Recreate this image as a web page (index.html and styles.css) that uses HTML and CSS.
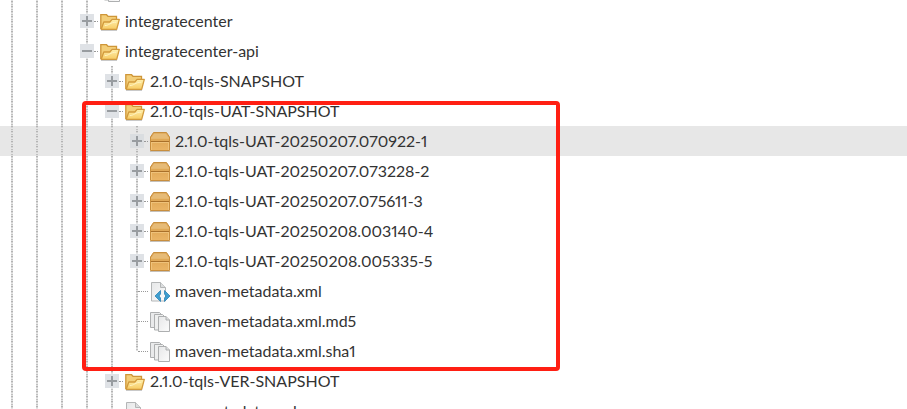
FILE: index.html
```html
<!DOCTYPE html>
<html lang="en">
<head>
    <meta charset="UTF-8">
    <meta name="viewport" content="width=device-width, initial-scale=1.0">
    <title>Artifact Tree</title>
    <link rel="stylesheet" href="styles.css">
</head>
<body>
    <!-- Icons shared by the tree rows -->
    <svg class="sprite" aria-hidden="true">
        <defs>
            <linearGradient id="gold" x1="0" y1="0" x2="0" y2="1">
                <stop offset="0" stop-color="#fff0ad"/>
                <stop offset="1" stop-color="#f7cb63"/>
            </linearGradient>
            <linearGradient id="wood" x1="0" y1="0" x2="0" y2="1">
                <stop offset="0" stop-color="#d89f4c"/>
                <stop offset="1" stop-color="#ebb566"/>
            </linearGradient>
            <linearGradient id="paper" x1="0" y1="0" x2="1" y2="1">
                <stop offset="0" stop-color="#e6e7e8"/>
                <stop offset="1" stop-color="#fcfcfc"/>
            </linearGradient>
            <symbol id="folder" viewBox="0 0 20 20">
                <path d="M1 18.500h16" stroke="#c9c9c9"/>
                <path d="M.8 17V2.700h5.700l1.500 1.600h8.500v3" fill="#f3ce78" stroke="#cf9638" stroke-width="1.300"/>
                <path d="M1.200 17.300l2.600-7.300h6l2.300-2.700h7.200l-2.600 10z" fill="url(#gold)" stroke="#d29a3c" stroke-width="1.300" stroke-linejoin="round"/>
                <path d="M4.800 13.500c4 .4 5.500-3.600 11.500-3.200" fill="none" stroke="#fff3c2"/>
            </symbol>
            <symbol id="package" viewBox="0 0 20 20">
                <path d="M0 19.500h20" stroke="#c4c0ba"/>
                <path d="M.5 18.500V5l3-4.500h13l3 4.500v13.500z" fill="url(#wood)" stroke="#c88e3e"/>
                <path d="M1.500 5.500l2.500-4h12l2.500 4z" fill="#e6bb78"/>
                <path d="M1 6h18" stroke="#edc788"/>
                <path d="M1 9.500h18" stroke="#a9702a"/>
                <path d="M1 10.500h18M1.500 11v7M18.500 11v7" stroke="#efc27a"/>
            </symbol>
            <symbol id="page" viewBox="0 0 20 20">
                <path d="M1.500.5h9l5 5v13.500h-14z" fill="url(#paper)" stroke="#b4b6b7"/>
                <path d="M10.500.5v5h5" fill="#dcdedf" stroke="#b4b6b7"/>
            </symbol>
            <symbol id="xml" viewBox="0 0 20 20">
                <use href="#page"/>
                <path d="M5 14l5.500-5.500v3.500l-1.500 2 1.500 2v3.500zM20 14l-5.500-5.500v3.500l1.500 2-1.500 2v3.500z" fill="#3f9fd0" stroke="#2d83b5" stroke-width=".8"/>
            </symbol>
            <symbol id="files" viewBox="0 0 20 20">
                <path d="M.5.500h9l2 2v13h-11z" fill="#e9eaeb" stroke="#adafb0"/>
                <path d="M4.500 2.500h8l2 2v13.500h-10z" fill="#eeefef" stroke="#adafb0"/>
                <path d="M8.500 4.500h7.500l3.500 3.500v11.500h-11z" fill="url(#paper)" stroke="#adafb0"/>
                <path d="M16 4.500V8h3.500" fill="#dcdedf" stroke="#adafb0"/>
            </symbol>
        </defs>
    </svg>

    <ul class="tree">
        <li>
            <div class="row">
                <span class="guide"></span><span class="guide"></span><span class="guide"></span>
                <span class="guide branch"></span>
                <svg class="icon"><use href="#files"/></svg>
            </div>
        </li>
        <li>
            <div class="row">
                <span class="guide"></span><span class="guide"></span><span class="guide"></span>
                <span class="guide branch"><button class="toggle plus" aria-label="Expand"></button></span>
                <svg class="icon"><use href="#folder"/></svg>
                <span class="label">integratecenter</span>
            </div>
        </li>
        <li>
            <div class="row">
                <span class="guide"></span><span class="guide"></span><span class="guide"></span>
                <span class="guide branch"><button class="toggle" aria-label="Collapse"></button></span>
                <svg class="icon"><use href="#folder"/></svg>
                <span class="label">integratecenter-api</span>
            </div>
            <ul>
                <li>
                    <div class="row">
                        <span class="guide"></span><span class="guide"></span><span class="guide"></span><span class="guide"></span>
                        <span class="guide branch"><button class="toggle plus" aria-label="Expand"></button></span>
                        <svg class="icon"><use href="#folder"/></svg>
                        <span class="label">2.1.0-tqls-SNAPSHOT</span>
                    </div>
                </li>
                <li class="marked">
                    <div class="row">
                        <span class="guide"></span><span class="guide"></span><span class="guide"></span><span class="guide"></span>
                        <span class="guide branch"><button class="toggle" aria-label="Collapse"></button></span>
                        <svg class="icon"><use href="#folder"/></svg>
                        <span class="label">2.1.0-tqls-UAT-SNAPSHOT</span>
                    </div>
                    <ul>
                        <li class="row selected">
                            <span class="guide"></span><span class="guide"></span><span class="guide"></span><span class="guide"></span><span class="guide"></span>
                            <span class="guide branch"><button class="toggle plus" aria-label="Expand"></button></span>
                            <svg class="icon"><use href="#package"/></svg>
                            <span class="label">2.1.0-tqls-UAT-20250207.070922-1</span>
                        </li>
                        <li class="row">
                            <span class="guide"></span><span class="guide"></span><span class="guide"></span><span class="guide"></span><span class="guide"></span>
                            <span class="guide branch"><button class="toggle plus" aria-label="Expand"></button></span>
                            <svg class="icon"><use href="#package"/></svg>
                            <span class="label">2.1.0-tqls-UAT-20250207.073228-2</span>
                        </li>
                        <li class="row">
                            <span class="guide"></span><span class="guide"></span><span class="guide"></span><span class="guide"></span><span class="guide"></span>
                            <span class="guide branch"><button class="toggle plus" aria-label="Expand"></button></span>
                            <svg class="icon"><use href="#package"/></svg>
                            <span class="label">2.1.0-tqls-UAT-20250207.075611-3</span>
                        </li>
                        <li class="row">
                            <span class="guide"></span><span class="guide"></span><span class="guide"></span><span class="guide"></span><span class="guide"></span>
                            <span class="guide branch"><button class="toggle plus" aria-label="Expand"></button></span>
                            <svg class="icon"><use href="#package"/></svg>
                            <span class="label">2.1.0-tqls-UAT-20250208.003140-4</span>
                        </li>
                        <li class="row">
                            <span class="guide"></span><span class="guide"></span><span class="guide"></span><span class="guide"></span><span class="guide"></span>
                            <span class="guide branch"><button class="toggle plus" aria-label="Expand"></button></span>
                            <svg class="icon"><use href="#package"/></svg>
                            <span class="label">2.1.0-tqls-UAT-20250208.005335-5</span>
                        </li>
                        <li class="row">
                            <span class="guide"></span><span class="guide"></span><span class="guide"></span><span class="guide"></span><span class="guide"></span>
                            <span class="guide branch leaf"></span>
                            <svg class="icon"><use href="#xml"/></svg>
                            <span class="label">maven-metadata.xml</span>
                        </li>
                        <li class="row">
                            <span class="guide"></span><span class="guide"></span><span class="guide"></span><span class="guide"></span><span class="guide"></span>
                            <span class="guide branch leaf"></span>
                            <svg class="icon"><use href="#files"/></svg>
                            <span class="label">maven-metadata.xml.md5</span>
                        </li>
                        <li class="row">
                            <span class="guide"></span><span class="guide"></span><span class="guide"></span><span class="guide"></span><span class="guide"></span>
                            <span class="guide branch leaf last"></span>
                            <svg class="icon"><use href="#files"/></svg>
                            <span class="label">maven-metadata.xml.sha1</span>
                        </li>
                    </ul>
                </li>
                <li>
                    <div class="row">
                        <span class="guide"></span><span class="guide"></span><span class="guide"></span><span class="guide"></span>
                        <span class="guide branch"><button class="toggle plus" aria-label="Expand"></button></span>
                        <svg class="icon"><use href="#folder"/></svg>
                        <span class="label">2.1.0-tqls-VER-SNAPSHOT</span>
                    </div>
                </li>
                <li>
                    <div class="row">
                        <span class="guide"></span><span class="guide"></span><span class="guide"></span><span class="guide"></span>
                        <span class="guide branch leaf"></span>
                        <svg class="icon"><use href="#xml"/></svg>
                        <span class="label">maven-metadata.xml</span>
                    </div>
                </li>
            </ul>
        </li>
    </ul>
</body>
</html>
```

FILE: styles.css
```css
body {
    margin: 0;
    height: 100vh;
    overflow: hidden;
    background-color: #fff;
    color: #333;
    font-family: Lato, "Liberation Sans", sans-serif;
    font-size: 16px;
    font-variant-numeric: proportional-nums;
}
.sprite {
    display: block;
    width: 0;
    height: 0;
}
ul {
    list-style: none;
    margin: 0;
    padding: 0;
}
/* the list is scrolled most of a row down */
.tree {
    margin-top: -24px;
}
.row {
    display: flex;
    align-items: center;
    height: 30px;
}
.selected {
    background-color: #e7e7e7;
}
/* dotted vertical line in every indent column */
.guide {
    flex: none;
    box-sizing: border-box;
    width: 25px;
    height: 30px;
    background: repeating-linear-gradient(#b4b4b4 0 1px, #d4d4d4 1px 2px, #e6e6e6 2px 3px, #c0c0c0 3px 4px, #e0e0e0 4px 5px) 11px 0 / 2px 30px no-repeat;
}
.branch {
    display: flex;
    align-items: center;
    padding-left: 5px;
}
.branch::after {
    content: "";
    width: 4px;
    border-top: 1px dotted #999;
}
.leaf::after {
    width: 10px;
    margin-left: 8px;
}
.last {
    background-size: 2px 15px;
}
.toggle {
    width: 14px;
    height: 14px;
    padding: 0;
    border: none;
    background: linear-gradient(#989ca0, #989ca0) center / 10px 2px no-repeat #dfe2e6;
    cursor: pointer;
}
.plus {
    background:
        linear-gradient(#989ca0, #989ca0) center / 10px 2px no-repeat,
        linear-gradient(#989ca0, #989ca0) center / 2px 10px no-repeat
        #dfe2e6;
}
.selected .toggle {
    background-color: #dadde0;
}
.icon {
    flex: none;
    width: 20px;
    height: 20px;
    margin-top: 2px;
}
.label {
    margin-left: 5px;
    line-height: 20px;
    white-space: nowrap;
}
/* red frame round the snapshot folder */
.marked {
    position: relative;
}
.marked::after {
    content: "";
    position: absolute;
    top: 5px;
    bottom: -5px;
    left: 82px;
    box-sizing: border-box;
    width: 478px;
    border: 4px solid #ff1f13;
    border-radius: 4px;
    pointer-events: none;
}
```
